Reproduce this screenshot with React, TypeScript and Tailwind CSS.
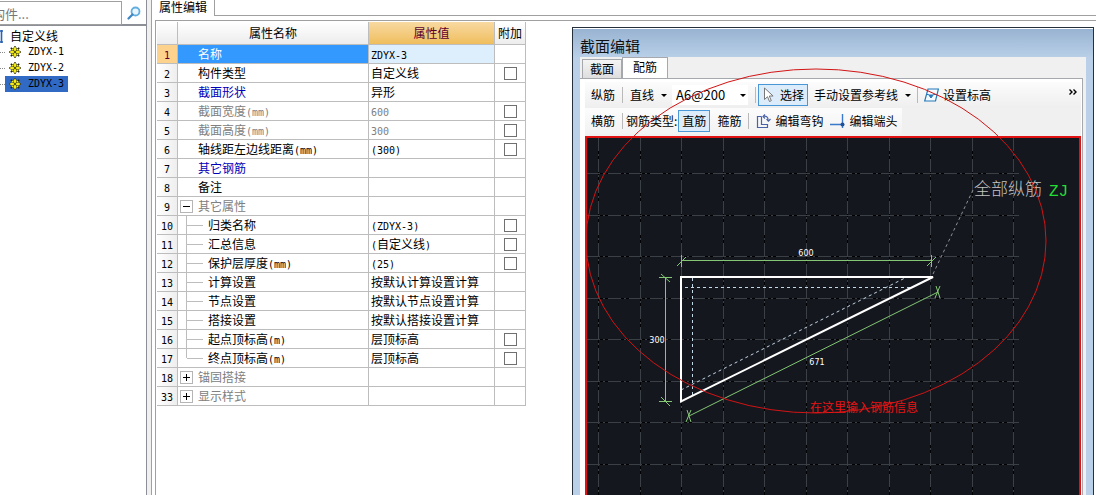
import { useState } from "react";
import type { ReactNode } from "react";

type Row = {
  no: number;
  name: string;
  value?: string;
  check?: boolean;
  tone?: "blue" | "gray";
  // tree level: a group header, a child of the group, or the last child
  node?: "open" | "closed" | "child" | "last";
};

const ROWS: Row[] = [
  { no: 1, name: "名称", value: "ZDYX-3" },
  { no: 2, name: "构件类型", value: "自定义线", check: true },
  { no: 3, name: "截面形状", value: "异形", tone: "blue" },
  { no: 4, name: "截面宽度(mm)", value: "600", check: true, tone: "gray" },
  { no: 5, name: "截面高度(mm)", value: "300", check: true, tone: "gray" },
  { no: 6, name: "轴线距左边线距离(mm)", value: "(300)", check: true },
  { no: 7, name: "其它钢筋", tone: "blue" },
  { no: 8, name: "备注" },
  { no: 9, name: "其它属性", tone: "gray", node: "open" },
  { no: 10, name: "归类名称", value: "(ZDYX-3)", check: true, node: "child" },
  { no: 11, name: "汇总信息", value: "(自定义线)", check: true, node: "child" },
  { no: 12, name: "保护层厚度(mm)", value: "(25)", check: true, node: "child" },
  { no: 13, name: "计算设置", value: "按默认计算设置计算", node: "child" },
  { no: 14, name: "节点设置", value: "按默认节点设置计算", node: "child" },
  { no: 15, name: "搭接设置", value: "按默认搭接设置计算", node: "child" },
  { no: 16, name: "起点顶标高(m)", value: "层顶标高", check: true, node: "child" },
  { no: 17, name: "终点顶标高(m)", value: "层顶标高", check: true, node: "last" },
  { no: 18, name: "锚固搭接", tone: "gray", node: "closed" },
  { no: 33, name: "显示样式", tone: "gray", node: "closed" },
];

const GRID_X = [12, 54, 95, 137, 178, 220, 261, 303, 344, 386, 427];
const GRID_Y = [36, 78, 119, 161, 202, 244, 285, 327, 368, 410, 451, 493];

// Latin letters and digits are set half as wide as a Chinese character.
function Txt({ children }: { children: string }) {
  return (
    <>
      {children.split(/([\x21-\x7e]+)/).map((part, i) =>
        i % 2 ? (
          <span key={i} className="font-['DejaVu_Sans_Mono',monospace] text-[10px] leading-none">
            {part}
          </span>
        ) : (
          part
        )
      )}
    </>
  );
}

function GearIcon() {
  return (
    <svg width="12" height="12" viewBox="0 0 12 12" className="shrink-0">
      <path d="M6 0v12M0 6h12M1.800 1.800l8.400 8.400M10.200 1.800l-8.400 8.400" stroke="#222" strokeWidth="1.6" />
      <circle cx="6" cy="6" r="4.600" fill="#222" />
      <circle cx="6" cy="6" r="4" fill="#f6ee1c" />
      <path d="M4.500 2v8M7.500 2v8M2 4.500h8M2 7.500h8" stroke="#4a4a10" strokeWidth="0.6" />
      <path d="M6 0.800v10.400M0.800 6h10.400" stroke="#f6ee1c" strokeWidth="1.4" />
      <circle cx="6" cy="6" r="1" fill="#222" />
    </svg>
  );
}

function Arrow() {
  return (
    <svg width="6" height="3" viewBox="0 0 6 3" className="shrink-0">
      <path d="M0 0h6L3 3z" fill="#000" />
    </svg>
  );
}

function Sep() {
  return <span className="h-4 w-px shrink-0 bg-[#b9b9b9]" />;
}

function Tool({ active, menu, children }: { active?: boolean; menu?: boolean; children: ReactNode }) {
  return (
    <button
      type="button"
      className={
        active
          ? "flex h-[22px] shrink-0 items-center gap-1 border border-[#4a97d8] bg-[#dcecfa] px-[3px]"
          : menu
            ? "flex h-[22px] shrink-0 items-center gap-[7px]"
            : "flex h-[22px] shrink-0 items-center gap-1"
      }
    >
      {children}
      {menu && <Arrow />}
    </button>
  );
}

function Sidebar() {
  const [selected, setSelected] = useState("ZDYX-3");
  return (
    <aside className="flex w-[147px] shrink-0 flex-col overflow-hidden border-r border-[#8c9096] bg-white">
      <div className="-ml-3 flex h-[26px] shrink-0 items-start border-b-2 border-[#8c9096] pt-px">
        <input
          aria-label="搜索构件"
          placeholder="构件..."
          className="h-[24px] min-w-0 flex-1 border border-[#a0a0a0] bg-white pl-[3px] text-[13px] text-black outline-none placeholder:text-[#777]"
        />
        <button type="button" aria-label="搜索" className="grid h-[23px] w-6 place-items-center">
          <svg width="14" height="14" viewBox="0 0 14 14">
            <circle cx="8.5" cy="5.5" r="4" fill="#eaf6ff" stroke="#62aede" strokeWidth="1.8" />
            <path d="M5.5 8.5L1.5 12.5" stroke="#3d87c4" strokeWidth="2.2" strokeLinecap="round" />
          </svg>
        </button>
      </div>
      <div className="pt-[2px] leading-4">
        <div className="flex h-4 items-center gap-[7px]">
          <svg width="3" height="13" viewBox="0 0 3 13">
            <path d="M0 1h3M0 12h3M1.5 0v13" stroke="#2a62b8" strokeWidth="1.6" />
          </svg>
          自定义线
        </div>
        {["ZDYX-1", "ZDYX-2", "ZDYX-3"].map((id) => (
          <div key={id} className="flex h-4 items-center">
            <span className="w-[5px] border-t border-dotted border-[#888]" />
            <button
              type="button"
              onClick={() => setSelected(id)}
              className={`flex h-4 items-center gap-[7px] px-1 ${selected === id ? "bg-[#316ac5]" : ""}`}
            >
              <GearIcon />
              <Txt>{id}</Txt>
            </button>
          </div>
        ))}
      </div>
    </aside>
  );
}

function TreeMark({ node }: { node?: Row["node"] }) {
  if (node === "open" || node === "closed") {
    return (
      <button
        type="button"
        aria-label={node === "open" ? "折叠" : "展开"}
        className="mr-[5px] ml-[2px] grid h-[13px] w-[13px] shrink-0 place-items-center border border-[#b5b5b5] bg-white"
      >
        <svg width="7" height="7" viewBox="0 0 7 7">
          <path d={node === "open" ? "M0 3.5h7" : "M0 3.5h7M3.5 0v7"} stroke="#000" />
        </svg>
      </button>
    );
  }
  if (node) {
    return (
      <span className="ml-2 flex h-full w-[22px] shrink-0 items-center">
        <span className={`w-px bg-[#bdbdbd] ${node === "last" ? "mb-auto h-1/2" : "h-full"}`} />
        <span className="h-px w-4 bg-[#bdbdbd]" />
      </span>
    );
  }
  return <span className="w-5 shrink-0" />;
}

function PropertyTable() {
  const line = "border-r border-b border-[#bdbdbd] p-0";
  return (
    <table className="w-[369px] shrink-0 table-fixed border-separate border-spacing-0 self-start leading-[18px]">
      <colgroup>
        <col className="w-[21px]" />
        <col className="w-[191px]" />
        <col className="w-[126px]" />
        <col className="w-[31px]" />
      </colgroup>
      <thead>
        <tr className="h-[23px] bg-linear-to-b from-white to-[#ececec]">
          <th className={line} aria-label="序号" />
          <th className={`${line} font-normal`}>属性名称</th>
          <th className={`${line} bg-linear-to-b from-[#f8d9a0] to-[#efbe5c] font-normal text-[#5a0030]`}>
            属性值
          </th>
          <th className={`${line} font-normal`}>附加</th>
        </tr>
      </thead>
      <tbody>
        {ROWS.map((r) => {
          const current = r.no === 1;
          const tone =
            r.tone === "blue" ? "text-[#0000b8]" : r.tone === "gray" ? "text-[#808080]" : "text-black";
          return (
            <tr key={r.no} className="h-[19px]">
              <th
                className={`${line} font-normal ${
                  current ? "bg-[#fcd28c] text-[#5a0030]" : "bg-linear-to-r from-white to-[#eeeeee]"
                }`}
              >
                <Txt>{String(r.no)}</Txt>
              </th>
              <td className={`${line} ${current ? "bg-[#3399ff] text-white" : tone}`}>
                <div className="flex h-[18px] items-center">
                  <TreeMark node={r.node} />
                  <span className="whitespace-nowrap">
                    <Txt>{r.name}</Txt>
                  </span>
                </div>
              </td>
              <td
                className={`${line} pl-[2px] whitespace-nowrap ${current ? "bg-[#ddeefd]" : ""} ${
                  r.tone === "gray" ? "text-[#808080]" : "text-black"
                }`}
              >
                {r.value && <Txt>{r.value}</Txt>}
              </td>
              <td className={line}>
                {r.check && (
                  <input
                    type="checkbox"
                    aria-label={`附加 ${r.name}`}
                    className="mx-auto block h-[13px] w-[13px] appearance-none border border-[#707070] bg-white checked:bg-[#3399ff]"
                  />
                )}
              </td>
            </tr>
          );
        })}
      </tbody>
    </table>
  );
}

function Drawing() {
  return (
    <svg className="block h-full w-full font-['DejaVu_Sans',sans-serif] text-[8px]">
      {/* grid */}
      {GRID_X.map((x) => (
        <g key={x} shapeRendering="crispEdges">
          <path d={`M${x - 0.5} 0V520`} stroke="#000" />
          <path d={`M${x - 0.5} 0V520`} stroke="#3b4046" strokeDasharray="13 3 2 3" />
        </g>
      ))}
      {GRID_Y.map((y) => (
        <g key={y} shapeRendering="crispEdges">
          <path d={`M0 ${y - 0.5}H432`} stroke="#000" />
          <path d={`M0 ${y - 0.5}H432`} stroke="#3b4046" strokeDasharray="13 3 2 3" />
        </g>
      ))}

      {/* cover line and leader */}
      <g fill="none" stroke="#c3d8e6" strokeDasharray="3 3">
        <path d="M98 149.5H325M105.5 140V259" />
        <path d="M94 252L320 139" />
        <path d="M346 136L386 52" stroke="#8d9296" />
      </g>

      {/* section outline */}
      <path d="M94 139H346L94 263.5Z" fill="none" stroke="#fff" strokeWidth="2" />

      {/* dimensions */}
      <g fill="none" stroke="#84c674">
        <path d="M94.5 122.5H344.5M94.5 117v12M344.5 117v12M90 128l9-9M340 128l9-9" />
        <path d="M78.5 139V264M72 139.5h13M72 263.5h13M74 136l9 8M74 259l9 9" />
        <path d="M102 278L351 154M100 272l4 12M104 272l-5 12M349 148l4 12M353 148l-5 12" />
      </g>
      <g fill="#fff" textAnchor="middle">
        <text x="219" y="118">600</text>
        <text x="70" y="205">300</text>
        <text x="230" y="227">671</text>
      </g>
      <text x="387" y="57" fill="#c4c4c4" className="font-['Noto_Sans_CJK_SC',sans-serif] text-[17px] font-light">
        全部纵筋
      </text>
      <text x="462" y="58" fill="#22dd33" className="font-['Liberation_Mono',monospace] text-[16px]">
        ZJ
      </text>
    </svg>
  );
}

function SectionEditor() {
  return (
    <section className="relative mt-[5px] mr-[2px] ml-[46px] flex min-w-0 flex-1 flex-col overflow-hidden border border-b-0 border-[#25303c] bg-[#bad0e8]">
      <h2 className="flex h-[29px] shrink-0 items-center border-t border-white bg-linear-to-b from-[#98b3d1] to-[#b9cfe8] pt-[6px] pl-[7px] text-[15px] text-[#101010]">
        截面编辑
      </h2>
      <div className="mx-[7px] flex min-h-0 flex-1 flex-col bg-[#f0f0f0]">
        <div role="tablist" className="flex h-[21px] shrink-0 items-end pl-[2px]">
          <button
            role="tab"
            type="button"
            className="h-[19px] w-10 border border-b-0 border-[#a5a8ac] bg-linear-to-b from-[#f4f4f4] to-[#dedede]"
          >
            截面
          </button>
          <button
            role="tab"
            type="button"
            aria-selected="true"
            className="h-[21px] w-[46px] border border-b-0 border-[#a5a8ac] bg-white pb-[2px]"
          >
            配筋
          </button>
        </div>
        <div className="mr-[3px] flex min-h-0 flex-1 flex-col border-t border-r border-[#a5a8ac] bg-white pt-[3px] pr-px pl-[5px]">
          <div className="flex h-[26px] shrink-0 items-center bg-linear-to-b from-[#fcfcfc] to-[#efefef] pl-[6px]">
            <div className="flex min-w-0 flex-1 items-center gap-[7px] overflow-hidden whitespace-nowrap">
              <Tool>纵筋</Tool>
              <Sep />
              <Tool menu>直线</Tool>
              <span className="relative -ml-[2px] flex shrink-0 items-center bg-white">
                <select
                  aria-label="钢筋信息"
                  className="h-5 w-[76px] appearance-none bg-transparent pl-1 text-[13px] outline-none"
                >
                  <option>A6@200</option>
                </select>
                <span className="pointer-events-none absolute right-[2px]">
                  <Arrow />
                </span>
              </span>
              <span className="flex shrink-0 items-center gap-[2px]">
                <Sep />
                <Tool active>
                  <svg width="14" height="16" viewBox="0 0 14 16">
                    <path
                      d="M2.5 1v11.5l3-2.8 2 4.8 1.8-.8-2-4.7h3.8z"
                      fill="#fff"
                      stroke="#777"
                      strokeWidth="1"
                    />
                  </svg>
                  选择
                </Tool>
              </span>
              <span className="-ml-px flex shrink-0 items-center gap-[6px]">
                <Tool menu>手动设置参考线</Tool>
                <Sep />
                <Tool>
                  <svg width="15" height="14" viewBox="0 0 15 14">
                    <path d="M4 1h10.400L11.500 13H.7z" fill="#f4faff" stroke="#2478b8" strokeWidth="1.2" />
                    <path d="M2.500 6.500h2l2.500 3.500 2.500-3.500h3" fill="none" stroke="#2478b8" />
                    <path d="M4.500 6.500h5L7 10z" fill="#2478b8" />
                  </svg>
                  设置标高
                </Tool>
              </span>
            </div>
            <button type="button" aria-label="更多" className="mr-1 pb-[6px]">
              <svg width="8" height="6" viewBox="0 0 8 6">
                <path d="M0.5 0.5L3 3 0.5 5.5M4.5 0.5L7 3 4.5 5.5" fill="none" stroke="#000" strokeWidth="1.4" />
              </svg>
            </button>
          </div>
          <div className="flex h-[28px] shrink-0 items-start bg-[#f0f0f0]">
            <div className="flex h-[26px] items-center gap-[7px] overflow-hidden bg-linear-to-b from-[#fcfcfc] to-[#f2f2f2] pr-[5px] pl-[6px] whitespace-nowrap">
              <Tool>横筋</Tool>
              <Sep />
              <span className="-ml-1 flex shrink-0 items-center gap-px">
                钢筋类型:
                <Tool active>直筋</Tool>
              </span>
              <Tool>箍筋</Tool>
              <Sep />
              <Tool>
                <svg width="15" height="15" viewBox="0 0 15 15">
                  <path d="M5.500 2.500h-4v11h10V10" fill="none" stroke="#4a63a8" strokeWidth="1.2" />
                  <path d="M5.500 2.500v8h6" fill="none" stroke="#4a63a8" strokeWidth="1.2" />
                  <path d="M7 2.500c3-1 5.500.5 5 4M12.500 7.500l-2-2.500M12 7.500l2.500-2.500M9 .5L7 2.500l2 2" fill="none" stroke="#4a63a8" strokeWidth="1.2" />
                </svg>
                编辑弯钩
              </Tool>
              <Tool>
                <svg width="15" height="16" viewBox="0 0 15 16">
                  <path d="M0 11.500H14M12.500 1V15" stroke="#3a79cc" strokeWidth="1.4" />
                  <circle cx="12.500" cy="11.500" r="2" fill="#1f4f96" />
                </svg>
                编辑端头
              </Tool>
            </div>
          </div>
          <div className="min-h-0 flex-1 overflow-hidden border-2 border-b-0 border-[#e01212] bg-[#14171e]">
            <Drawing />
          </div>
        </div>
      </div>

      {/* red markup over the window */}
      <svg className="pointer-events-none absolute inset-0 h-full w-full">
        <ellipse cx="243" cy="213" rx="230" ry="172" fill="none" stroke="#d21414" />
        <text x="237" y="384" fill="#e81414" className="font-['Noto_Sans_CJK_SC',sans-serif] text-[12px]">
          在这里输入钢筋信息
        </text>
      </svg>
    </section>
  );
}

export default function App() {
  return (
    <div className="flex h-screen overflow-hidden bg-[#f0f0f0] font-['Noto_Sans_CJK_SC',sans-serif] text-[12px] leading-4 text-black">
      <Sidebar />
      <main className="ml-1 flex min-w-0 flex-1 flex-col border-l border-[#a0a0a0] bg-white">
        <div className="flex h-4 shrink-0">
          <button type="button" className="flex items-start border-r border-[#a0a0a0] px-[7px] leading-[14px]">
            属性编辑
          </button>
          <span className="flex-1 border-b border-[#a0a0a0]" />
        </div>
        <div className="mt-1 ml-[3px] flex min-h-0 flex-1 border-t border-l border-[#a0a0a0] pt-px pl-px">
          <PropertyTable />
          <SectionEditor />
        </div>
      </main>
    </div>
  );
}
